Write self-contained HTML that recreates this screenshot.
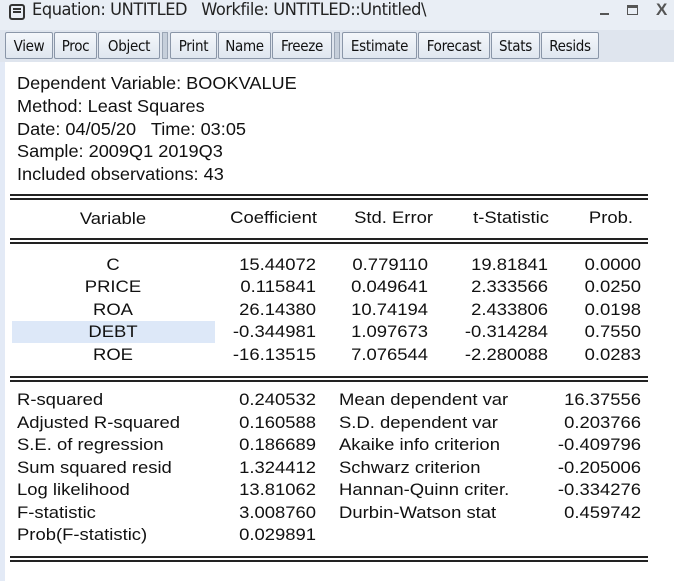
<!DOCTYPE html>
<html><head><style>
body{margin:0;width:674px;height:581px;background:#fff;position:relative;overflow:hidden;font-family:"Liberation Sans",Arial,sans-serif;color:#111}
.a{position:absolute;white-space:nowrap}
.btn{position:absolute;top:32px;height:27px;border:1px solid #8a96a8;border-radius:2px;background:linear-gradient(#f4f7fb,#dfe6ef);font-size:15px;line-height:27px;text-align:center;color:#111;box-sizing:border-box;font-family:"DejaVu Sans Condensed","Liberation Sans Narrow","Liberation Sans",sans-serif;letter-spacing:-0.3px}
.dl{position:absolute;left:10px;width:638px;height:2px;border-top:2px solid #222;border-bottom:2px solid #222;}
.r{position:absolute;text-align:right;font-size:17px;white-space:nowrap;transform:scaleX(1.085);transform-origin:right}
.c{position:absolute;text-align:center;font-size:17px;white-space:nowrap;line-height:22.4px;transform:scaleX(1.085);transform-origin:center}
.l{position:absolute;font-size:17px;white-space:nowrap;transform:scaleX(1.085);transform-origin:left}
.h{font-size:17.5px !important;transform:scaleX(1.037)}
</style></head><body>
<div class="a" style="left:0;top:0;width:674px;height:30px;background:#e9eef5"></div>
<div class="a" style="left:0;top:30px;width:674px;height:32px;background:#dfe5ee"></div>
<div class="a" style="left:0;top:62px;width:5px;height:519px;background:#e3eaf6"></div>
<div class="a" style="left:9px;top:4px;width:16px;height:16px;border:2px solid #333;border-radius:3px;box-sizing:border-box"></div>
<div class="a" style="left:13px;top:8px;width:8px;height:2px;background:#333;box-shadow:0 3px 0 #333"></div>
<div class="a" style="left:32px;top:0px;font-size:17px;font-family:'DejaVu Sans Condensed','Liberation Sans',sans-serif;letter-spacing:-0.4px;color:#222;transform:scaleX(1.06);transform-origin:left">Equation: UNTITLED&nbsp;&nbsp; Workfile: UNTITLED::Untitled\</div>
<div class="a" style="left:600px;top:13px;width:9px;height:2px;background:#555"></div>
<div class="a" style="left:627px;top:5px;width:11px;height:10px;border:1.5px solid #555;border-top-width:3px;box-sizing:border-box"></div>
<div class="a" style="left:656px;top:0px;font-size:17px;font-weight:bold;color:#555">X</div>
<div class="btn" style="left:5px;width:48px">View</div>
<div class="btn" style="left:54px;width:43px">Proc</div>
<div class="btn" style="left:98px;width:62px">Object</div>
<div class="a" style="left:162px;top:32px;width:6px;height:27px;background:#c6cfdb;border:1px solid #9aa5b5;box-sizing:border-box"></div>
<div class="btn" style="left:170px;width:47px">Print</div>
<div class="btn" style="left:218px;width:53px">Name</div>
<div class="btn" style="left:272px;width:60px">Freeze</div>
<div class="a" style="left:334px;top:32px;width:6px;height:27px;background:#c6cfdb;border:1px solid #9aa5b5;box-sizing:border-box"></div>
<div class="btn" style="left:342px;width:75px">Estimate</div>
<div class="btn" style="left:418px;width:72px">Forecast</div>
<div class="btn" style="left:491px;width:49px">Stats</div>
<div class="btn" style="left:541px;width:58px">Resids</div>

<div class="l h" style="left:17px;top:73px">Dependent Variable: BOOKVALUE</div>
<div class="l h" style="left:17px;top:96px">Method: Least Squares</div>
<div class="l h" style="left:17px;top:119px">Date: 04/05/20&nbsp;&nbsp; Time: 03:05</div>
<div class="l h" style="left:17px;top:141px">Sample: 2009Q1 2019Q3</div>
<div class="l h" style="left:17px;top:164px">Included observations: 43</div>

<div class="dl" style="top:194px"></div>
<div class="c" style="left:60px;width:106px;top:208px">Variable</div>
<div class="r" style="left:200px;width:117px;top:208px">Coefficient</div>
<div class="r" style="left:320px;width:113px;top:208px">Std. Error</div>
<div class="r" style="left:440px;width:109px;top:208px">t-Statistic</div>
<div class="r" style="left:560px;width:73px;top:208px">Prob.</div>
<div class="dl" style="top:238px"></div>

<div class="a" style="left:12px;top:321px;width:203px;height:22px;background:#dde8f8"></div>
<div class="c" style="left:60px;width:106px;top:254px">C<br>PRICE<br>ROA<br>DEBT<br>ROE</div>
<div class="r" style="left:200px;width:116px;top:254px;line-height:22.4px">15.44072<br>0.115841<br>26.14380<br>-0.344981<br>-16.13515</div>
<div class="r" style="left:320px;width:108px;top:254px;line-height:22.4px">0.779110<br>0.049641<br>10.74194<br>1.097673<br>7.076544</div>
<div class="r" style="left:440px;width:108px;top:254px;line-height:22.4px">19.81841<br>2.333566<br>2.433806<br>-0.314284<br>-2.280088</div>
<div class="r" style="left:560px;width:81px;top:254px;line-height:22.4px">0.0000<br>0.0250<br>0.0198<br>0.7550<br>0.0283</div>
<div class="dl" style="top:376px"></div>

<div class="l" style="left:17px;top:389px;line-height:22.5px">R-squared<br>Adjusted R-squared<br>S.E. of regression<br>Sum squared resid<br>Log likelihood<br>F-statistic<br>Prob(F-statistic)</div>
<div class="r" style="left:200px;width:116px;top:389px;line-height:22.5px">0.240532<br>0.160588<br>0.186689<br>1.324412<br>13.81062<br>3.008760<br>0.029891</div>
<div class="l" style="left:339px;top:389px;line-height:22.5px">Mean dependent var<br>S.D. dependent var<br>Akaike info criterion<br>Schwarz criterion<br>Hannan-Quinn criter.<br>Durbin-Watson stat</div>
<div class="r" style="left:520px;width:121px;top:389px;line-height:22.5px">16.37556<br>0.203766<br>-0.409796<br>-0.205006<br>-0.334276<br>0.459742</div>
<div class="dl" style="top:556px"></div>
</body></html>
